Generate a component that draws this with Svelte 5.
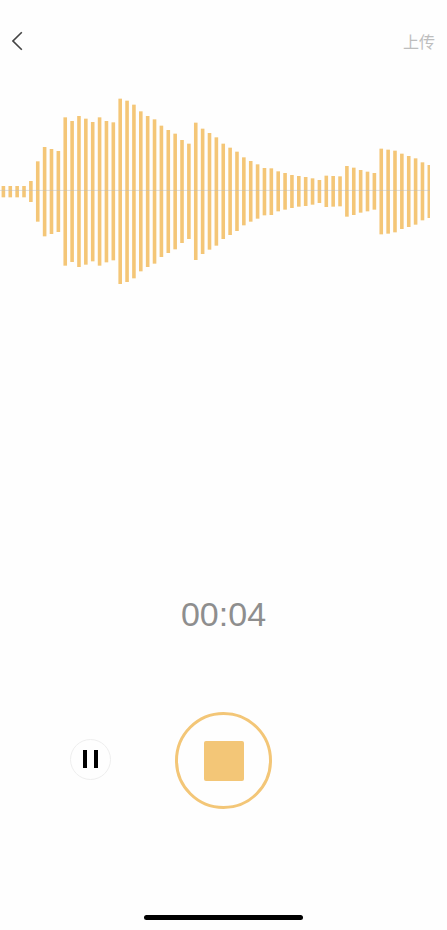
<script>
  const raw = [
    [288,322],[288,322],[288,322],[288,322],[273,336],[214,395],[171,439],[177,432],[183,426],[82,527],
    [93,516],[78,531],[86,524],[96,514],[82,527],[93,517],[97,511],[26,582],[32,576],[44,565],
    [64,544],[78,531],[88,521],[107,501],[120,489],[131,478],[150,459],[161,447],[98,510],[116,492],
    [129,479],[142,467],[161,447],[173,435],[185,423],[202,406],[213,395],[223,386],[234,376],[235,375],
    [244,364],[249,359],[255,354],[258,350],[261,348],[265,344],[270,339],[257,351],[258,350],[259,349],
    [228,380],[233,375],[240,368],[245,364],[249,359],[176,433],[179,431],[182,427],[191,417],[198,411],
    [205,404],[217,391],[225,384]
  ];
  const bars = raw.map(([t, b], i) => ({
    x: 1.6 + i * 6.87,
    y: t / 3,
    h: (b - t) / 3
  }));
</script>

<main class="page">
  <header class="top">
    <svg class="back" width="12" height="20" viewBox="0 0 12 20" aria-label="返回">
      <path d="M9.8 1.3 L1 10 L9.8 18.7" fill="none" stroke="#444" stroke-width="1.6" />
    </svg>
    <span class="upload">上传</span>
  </header>

  <svg class="wave" width="430" height="200" viewBox="0 0 430 200">
    {#each bars as b}
      <rect x={b.x} y={b.y} width="3.6" height={b.h} fill="#f4c677" />
    {/each}
    <rect x="0" y="99.9" width="430" height="1" fill="#bebebe" fill-opacity="0.5" />
  </svg>

  <div class="timer">00:04</div>

  <section class="controls">
    <button class="pause" aria-label="暂停"><i></i><i></i></button>
    <button class="stop" aria-label="停止"><i></i></button>
  </section>

  <div class="home"></div>
</main>

<style>
  :global(body) {
    margin: 0;
    background: #fff;
  }
  .page {
    width: 447px;
    height: 930px;
    display: flex;
    flex-direction: column;
    background: #fefefe;
    overflow: hidden;
    font-family: "Liberation Sans", Arial, sans-serif;
  }
  .page > * {
    flex: none;
  }
  .top {
    height: 24px;
    margin-top: 29px;
    padding: 0 12px;
    display: flex;
    align-items: center;
    justify-content: space-between;
  }
  .upload {
    font-family: "Noto Sans CJK SC", "Liberation Sans", sans-serif;
    font-size: 16px;
    line-height: 24px;
    color: #bdbdbd;
  }
  .wave {
    display: block;
    margin-top: 37px;
    overflow: hidden;
  }
  .timer {
    margin-top: 304px;
    height: 40px;
    line-height: 40px;
    text-align: center;
    font-size: 34px;
    color: #8e8e8e;
  }
  .controls {
    margin-top: 78px;
    padding-left: 70px;
    height: 97px;
    display: flex;
    align-items: center;
    gap: 64px;
  }
  button {
    padding: 0;
    background: none;
    display: flex;
    align-items: center;
    justify-content: center;
    border-radius: 50%;
    box-sizing: border-box;
  }
  .pause {
    width: 41px;
    height: 41px;
    margin-top: -3px;
    border: 1px solid #eee;
    gap: 7px;
  }
  .pause i {
    width: 4px;
    height: 18px;
    background: #000;
  }
  .stop {
    width: 97px;
    height: 97px;
    border: 3px solid #f3c677;
  }
  .stop i {
    width: 40px;
    height: 40px;
    border-radius: 2px;
    background: #f3c677;
  }
  .home {
    width: 159px;
    height: 5px;
    margin: 106px 0 0 144px;
    border-radius: 3px;
    background: #000;
  }
</style>
